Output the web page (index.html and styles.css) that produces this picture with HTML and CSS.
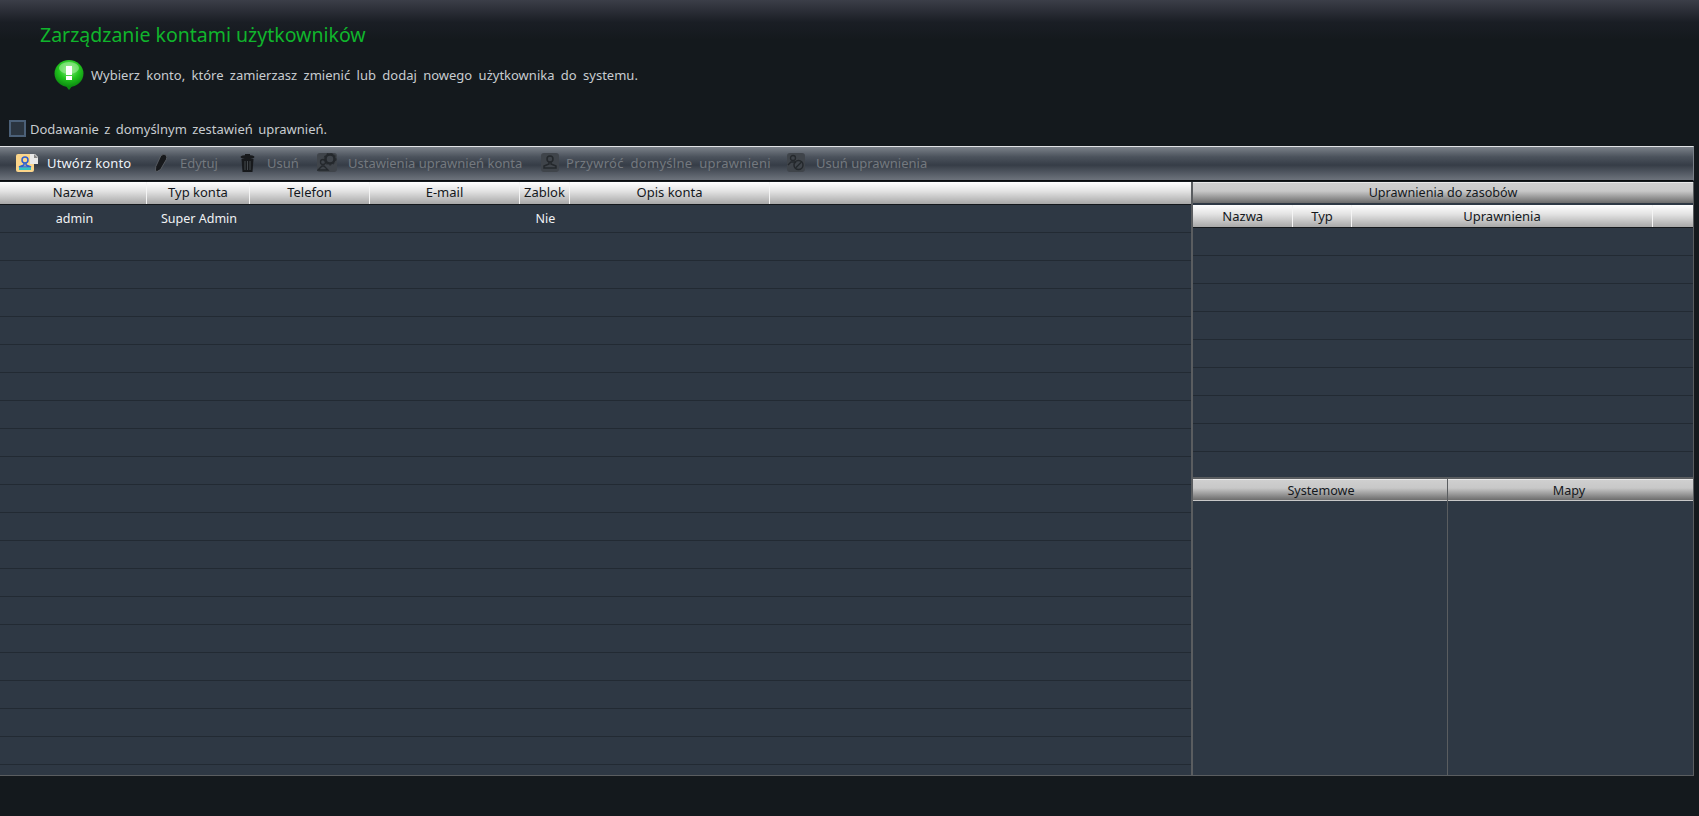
FILE: index.html
```html
<!DOCTYPE html>
<html lang="pl">
<head>
    <meta charset="UTF-8">
    <title>Zarządzanie kontami użytkowników</title>
    <link rel="stylesheet" href="styles.css">
</head>
<body>
    <div class="page">
        <div class="intro">
            <h1 class="pageTitle">Zarządzanie kontami użytkowników</h1>
            <div class="notice">
                <svg class="noticeIcon" width="30" height="30" viewBox="0 0 30 30">
                    <defs>
                        <radialGradient id="bubble" cx="50%" cy="35%" r="65%">
                            <stop offset="0" stop-color="#8ff08a"/>
                            <stop offset="0.55" stop-color="#22c41e"/>
                            <stop offset="1" stop-color="#0b8a10"/>
                        </radialGradient>
                    </defs>
                    <path d="M15 30 L11 25 L19 25 Z" fill="#0e8a12"/>
                    <ellipse cx="15" cy="13.500" rx="14.500" ry="13.500" fill="url(#bubble)"/>
                    <ellipse cx="15" cy="8" rx="10" ry="6" fill="#a8f0a0" opacity="0.55"/>
                    <rect x="12" y="6" width="6" height="9" fill="#fff"/>
                    <rect x="12" y="16" width="6" height="4" fill="#fff"/>
                </svg>
                <span class="noticeText">Wybierz konto, które zamierzasz zmienić lub dodaj nowego użytkownika do systemu.</span>
            </div>
            <label class="defaultCheck">
                <span class="checkBox"></span>
                <span class="checkText">Dodawanie z domyślnym zestawień uprawnień.</span>
            </label>
        </div>

        <div class="toolbar">
            <a class="toolBtn active btnCreate">
                <svg width="22" height="18" viewBox="0 0 22 18">
                    <rect x="0" y="0" width="18" height="18" rx="2" fill="#fbd58a"/>
                    <path d="M14 0 H19 L22 3 V10 H14 Z" fill="#e8e8e8"/>
                    <path d="M18 0 L22 4 H18 Z" fill="#888"/>
                    <circle cx="9" cy="6" r="3" fill="none" stroke="#2f5fd0" stroke-width="1.500"/>
                    <path d="M8 9 V11 L3 13 H15 L10 11 V9" fill="none" stroke="#2f5fd0" stroke-width="1.500"/>
                    <rect x="3" y="13.500" width="12" height="2.500" fill="#35c4c0"/>
                </svg>
                <span>Utwórz konto</span>
            </a>
            <a class="toolBtn btnEdit">
                <svg width="12" height="18" viewBox="0 0 12 18">
                    <path d="M6 1.500 Q9 -0.500 11 1 Q12.500 3 11.300 5.500 L5.500 15.500 L1.500 17.800 L0.500 16 L0.800 12.500 Z" fill="#17191c" stroke="#686d73" stroke-width="0.700"/>
                </svg>
                <span>Edytuj</span>
            </a>
            <a class="toolBtn btnDelete">
                <svg width="15" height="18" viewBox="0 0 15 18">
                    <ellipse cx="7.500" cy="3" rx="7" ry="2" fill="#17191c"/>
                    <rect x="5" y="0" width="5" height="2" fill="#17191c"/>
                    <path d="M1.500 5 H13.500 L12.500 18 H2.500 Z" fill="#17191c"/>
                    <path d="M5 7 V16 M7.500 7 V16 M10 7 V16" stroke="#50555b" stroke-width="0.800"/>
                </svg>
                <span>Usuń</span>
            </a>
            <a class="toolBtn btnRights">
                <span class="mutedIcon mutedWide">
                    <svg width="20" height="18" viewBox="0 0 20 18">
                        <circle cx="13" cy="6" r="4.500" fill="none" stroke="#24282c" stroke-width="2.500"/>
                        <circle cx="13" cy="6" r="6" fill="none" stroke="#24282c" stroke-width="1" stroke-dasharray="2 2"/>
                        <circle cx="6" cy="9" r="2.500" fill="none" stroke="#24282c" stroke-width="1.300"/>
                        <path d="M1 17 L5 13 H7 L11 17 Z" fill="none" stroke="#24282c" stroke-width="1.300"/>
                    </svg>
                </span>
                <span>Ustawienia uprawnień konta</span>
            </a>
            <a class="toolBtn btnRestore">
                <span class="mutedIcon">
                    <svg width="18" height="18" viewBox="0 0 18 18">
                        <circle cx="9" cy="6" r="3" fill="none" stroke="#24282c" stroke-width="1.500"/>
                        <path d="M8 9 V11 L3 13 V15 H15 V13 L10 11 V9" fill="none" stroke="#24282c" stroke-width="1.500"/>
                    </svg>
                </span>
                <span class="wide">Przywróć domyślne uprawnieni</span>
            </a>
            <a class="toolBtn btnRemove">
                <span class="mutedIcon">
                    <svg width="18" height="18" viewBox="0 0 18 18">
                        <circle cx="6" cy="5" r="2.500" fill="none" stroke="#24282c" stroke-width="1.300"/>
                        <path d="M1 12 L4 9 H8 L9 10" fill="none" stroke="#24282c" stroke-width="1.300"/>
                        <circle cx="11.500" cy="12" r="4.500" fill="none" stroke="#24282c" stroke-width="1.500"/>
                        <path d="M8.500 15 L14.500 9" stroke="#24282c" stroke-width="1.500"/>
                    </svg>
                </span>
                <span>Usuń uprawnienia</span>
            </a>
        </div>

        <div class="content">
            <div class="accounts">
                <table class="grid accountGrid">
                    <colgroup>
                        <col class="cName"><col class="cType"><col class="cPhone"><col class="cMail"><col class="cLock"><col class="cDesc"><col>
                    </colgroup>
                    <thead>
                        <tr><th>Nazwa</th><th>Typ konta</th><th>Telefon</th><th>E-mail</th><th>Zablok</th><th>Opis konta</th><th></th></tr>
                    </thead>
                    <tbody id="accountRows">
                        <tr><td>admin</td><td>Super Admin</td><td></td><td></td><td>Nie</td><td></td><td></td></tr>
                    </tbody>
                </table>
            </div>

            <div class="rights">
                <div class="rightsTop">
                    <div class="barTitle">Uprawnienia do zasobów</div>
                    <table class="grid rightsGrid">
                        <colgroup>
                            <col class="rName"><col class="rType"><col class="rPerm"><col>
                        </colgroup>
                        <thead>
                            <tr><th>Nazwa</th><th>Typ</th><th>Uprawnienia</th><th></th></tr>
                        </thead>
                        <tbody id="rightsRows"></tbody>
                    </table>
                </div>
                <div class="rightsBottom">
                    <div class="treePane">
                        <div class="barTitle">Systemowe</div>
                    </div>
                    <div class="treePane">
                        <div class="barTitle">Mapy</div>
                    </div>
                </div>
            </div>
        </div>
    </div>
    <script src="rows.js"></script>
</body>
</html>
```

FILE: styles.css
```css
html, body {
    margin: 0;
    height: 100%;
    overflow: hidden;
}

body {
    font-family: "Noto Sans", sans-serif;
    font-size: 13px;
    background-color: #14191d;
    color: #d2d6da;
}

.page {
    height: 816px;
    display: flex;
    flex-direction: column;
    background: linear-gradient(#3b3e48 0, #1a1e25 22px, #14191d 40px);
}

.intro {
    height: 146px;
    box-sizing: border-box;
    padding-top: 23px;
}

.pageTitle {
    margin: 0 0 13px 40px;
    font-size: 19.5px;
    line-height: 24px;
    font-weight: normal;
    color: #10b52c;
}

.notice {
    height: 30px;
    margin-left: 54px;
    display: flex;
    align-items: center;
    gap: 7px;
}

.noticeText {
    word-spacing: 3px;
    color: #c8ccd0;
}

.defaultCheck {
    height: 17px;
    margin: 30px 0 0 9px;
    display: flex;
    align-items: center;
    gap: 4px;
}

.checkBox {
    width: 13px;
    height: 13px;
    border: 2px solid #4b6078;
    background-color: #2b3540;
}

.checkText {
    word-spacing: 2px;
    color: #c8ccd0;
}

/* toolbar */
.toolbar {
    height: 35px;
    width: 1694px;
    box-sizing: border-box;
    display: flex;
    align-items: center;
    padding-left: 16px;
    padding-bottom: 2px;
    border-top: 1px solid #e2e4e6;
    border-bottom: 1px solid #0a0c0e;
    border-right: 1px solid #7a8088;
    background: linear-gradient(#7b8189 0, #4b525c 30%, #363d47 55%, #6d737c 100%);
    color: #74797f;
}

.toolBtn {
    display: flex;
    align-items: center;
    gap: 9px;
}

.toolBtn.active {
    color: #eef3f8;
    letter-spacing: 0.15px;
}

.btnCreate { width: 139px; }
.btnEdit { width: 85px; gap: 13px; }
.btnDelete { width: 77px; gap: 12px; }
.btnRights { width: 224px; gap: 11px; }
.btnRestore { width: 246px; gap: 7px; }
.btnRemove { gap: 11px; }

.wide {
    word-spacing: 3px;
    letter-spacing: 0.3px;
}

.mutedIcon {
    width: 18px;
    height: 19px;
    display: flex;
    justify-content: center;
    border-radius: 3px;
    background-color: #3f444a;
}

.mutedWide {
    width: 20px;
}

/* tables */
.content {
    width: 1694px;
    height: 595px;
    padding-top: 1px;
    box-sizing: border-box;
    display: flex;
    border-bottom: 1px solid #5a5d60;
    overflow: hidden;
}

.accounts {
    width: 1191px;
    background-color: #2e3844;
    border-right: 2px solid #5a5d60;
    overflow: hidden;
}

.grid {
    width: 100%;
    table-layout: fixed;
    border-collapse: collapse;
    background-color: #2e3844;
}

.grid th {
    height: 20px;
    padding: 0 0 2px 1px;
    font-weight: normal;
    color: #14181c;
    background: linear-gradient(#ffffff 0, #e4e4e4 40%, #a8a8a8 100%);
    border-right: 1px solid #f4f4f4;
    border-bottom: 1px solid #14181c;
    white-space: nowrap;
}

.grid th:last-child {
    border-right: none;
}

.rightsGrid th {
    height: 22px;
    padding-bottom: 0;
}

.grid td {
    height: 27px;
    padding: 0 0 0 3px;
    font-size: 12.5px;
    text-align: center;
    color: #f0f2f4;
    border-bottom: 1px solid #222a33;
}

.cName { width: 146px; }
.cType { width: 103px; }
.cPhone { width: 120px; }
.cMail { width: 150px; }
.cLock { width: 50px; }
.cDesc { width: 200px; }

.rName { width: 99px; }
.rType { width: 59px; }
.rPerm { width: 301px; }

.rights {
    flex: 1;
    display: flex;
    flex-direction: column;
    border-right: 1px solid #5a5d60;
    background-color: #2e3844;
}

.rightsTop {
    height: 295px;
    border-bottom: 2px solid #5a5d60;
    overflow: hidden;
}

.barTitle {
    height: 20px;
    line-height: 21px;
    font-size: 12.6px;
    text-align: center;
    color: #14181c;
    background: linear-gradient(#cfcfcf 0, #c8c8c8 40%, #6c6c6c 100%);
    border-top: 1px solid #e8e8e8;
}

.rightsTop .barTitle {
    line-height: 19px;
    margin-bottom: 2px;
}

.rightsBottom {
    flex: 1;
    display: flex;
}

.treePane {
    flex: 1;
}

.treePane .barTitle {
    border-bottom: 1px solid #c8c8c8;
    padding-right: 3px;
}

.treePane:first-child .barTitle {
    padding-right: 0;
    padding-left: 2px;
}

.treePane:first-child {
    flex: none;
    width: 254px;
    border-right: 1px solid #5a5d60;
}
```

FILE: rows.js
```js
// puste wiersze tabel
function addRows(id, count, cols) {
    var body = document.getElementById(id)
    for (var i = 0; i < count; i++) {
        var row = document.createElement('tr')
        for (var j = 0; j < cols; j++) {
            row.appendChild(document.createElement('td'))
        }
        body.appendChild(row)
    }
}

addRows('accountRows', 20, 7)
addRows('rightsRows', 9, 4)
```
